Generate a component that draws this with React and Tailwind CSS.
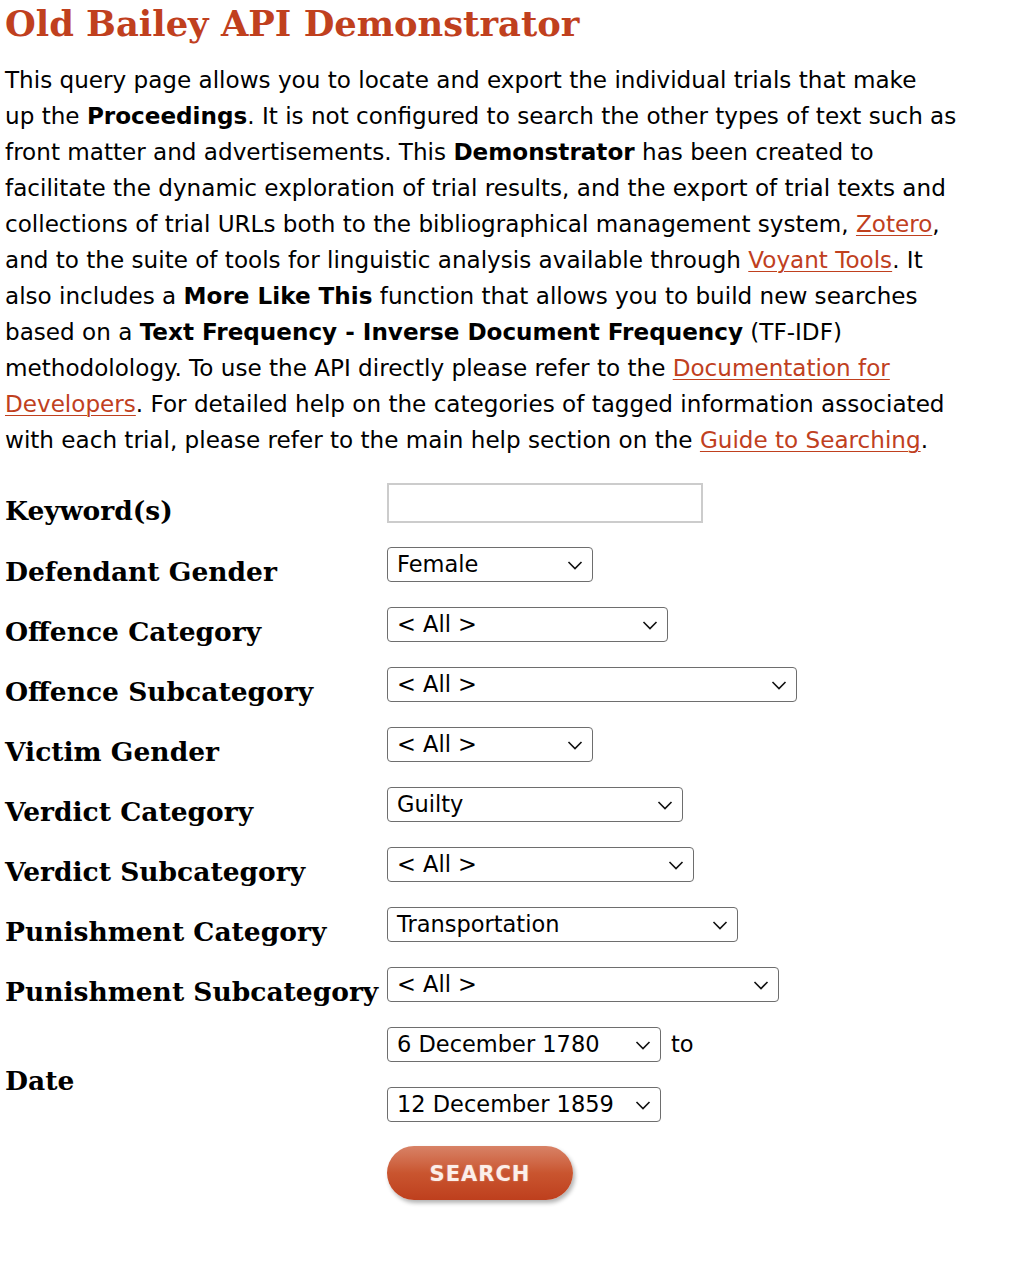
import React from "react";

const sans = { fontFamily: '"DejaVu Sans", "Liberation Sans", sans-serif' };

function A({ children }) {
  return <a className="text-[#c0401e] underline underline-offset-[3px] decoration-1">{children}</a>;
}

function Chevron() {
  return (
    <svg width="16" height="10" viewBox="0 0 16 10" className="absolute right-[10px] top-1/2 -translate-y-1/2 pointer-events-none">
      <path d="M1.5 2 L8 8.5 L14.5 2" fill="none" stroke="#111" strokeWidth="1.6" />
    </svg>
  );
}

function Sel({ w, value }) {
  return (
    <div className="relative" style={{ width: w }}>
      <div className="h-[35px] w-full rounded-[4px] border-[1.5px] border-[#6e6e6e] bg-white pl-[9px] pt-[1px] text-[22.5px] leading-[31px] text-black whitespace-nowrap" style={sans}>
        {value}
      </div>
      <Chevron />
    </div>
  );
}

function Label({ children }) {
  return (
    <div className="w-[382px] shrink-0 whitespace-nowrap text-[26.5px] font-bold text-black leading-[34px]" style={{ fontFamily: '"DejaVu Serif", Georgia, serif' }}>
      {children}
    </div>
  );
}

const rows = [
  ["Defendant Gender", 206, "Female"],
  ["Offence Category", 281, "< All >"],
  ["Offence Subcategory", 410, "< All >"],
  ["Victim Gender", 206, "< All >"],
  ["Verdict Category", 296, "Guilty"],
  ["Verdict Subcategory", 307, "< All >"],
  ["Punishment Category", 351, "Transportation"],
  ["Punishment Subcategory", 392, "< All >"],
];

export default function App() {
  return (
    <div className="bg-white min-h-[1262px] pl-[5px] pt-0 text-black">
      <h1 className="text-[35.3px] font-bold leading-[48px] text-[#c0401e]" style={{ fontFamily: '"DejaVu Serif", Georgia, serif' }}>
        Old Bailey API Demonstrator
      </h1>
      <div className="mt-[14px] text-[23.1px] leading-[36px] whitespace-nowrap" style={sans}>
        <div>This query page allows you to locate and export the individual trials that make</div>
        <div>up the <b>Proceedings</b>. It is not configured to search the other types of text such as</div>
        <div>front matter and advertisements. This <b>Demonstrator</b> has been created to</div>
        <div>facilitate the dynamic exploration of trial results, and the export of trial texts and</div>
        <div>collections of trial URLs both to the bibliographical management system, <A>Zotero</A>,</div>
        <div>and to the suite of tools for linguistic analysis available through <A>Voyant Tools</A>. It</div>
        <div>also includes a <b>More Like This</b> function that allows you to build new searches</div>
        <div>based on a <b>Text Frequency - Inverse Document Frequency</b> (TF-IDF)</div>
        <div>methodolology. To use the API directly please refer to the <A>Documentation for</A></div>
        <div><A>Developers</A>. For detailed help on the categories of tagged information associated</div>
        <div>with each trial, please refer to the main help section on the <A>Guide to Searching</A>.</div>
      </div>

      <div className="mt-[24px] flex flex-col">
        <div className="flex items-start h-[60px]">
          <div className="pt-[12px]"><Label>Keyword(s)</Label></div>
          <input className="mt-[1px] h-[40px] w-[316px] border-2 border-[#cccccc] bg-white outline-none" />
        </div>
        {rows.map(([l, w, v]) => (
          <div key={l} className="flex items-start h-[60px]">
            <div className="pt-[13px]"><Label>{l}</Label></div>
            <div className="mt-[5px]"><Sel w={w} value={v} /></div>
          </div>
        ))}
        <div className="flex items-start">
          <div className="pt-[42px]"><Label>Date</Label></div>
          <div className="flex flex-col gap-[25px] pt-[5px]">
            <div className="flex items-center gap-[10px]">
              <Sel w={274} value="6 December 1780" />
              <span className="text-[22.5px]" style={sans}>to</span>
            </div>
            <Sel w={274} value="12 December 1859" />
          </div>
        </div>
        <div className="pl-[382px] mt-[24px]">
          <button
            className="h-[54px] w-[186px] rounded-full bg-gradient-to-b from-[#d88266] via-[#c9552f] to-[#be3f1d] pt-[4px] text-[21px] font-bold tracking-[1px] text-[#fbeee9] shadow-[2px_3px_4px_rgba(0,0,0,0.3)] [text-shadow:0_0_2px_rgba(255,255,255,0.35)]"
            style={{ fontFamily: '"DejaVu Sans", "Liberation Sans", sans-serif' }}
          >
            SEARCH
          </button>
        </div>
      </div>
    </div>
  );
}
